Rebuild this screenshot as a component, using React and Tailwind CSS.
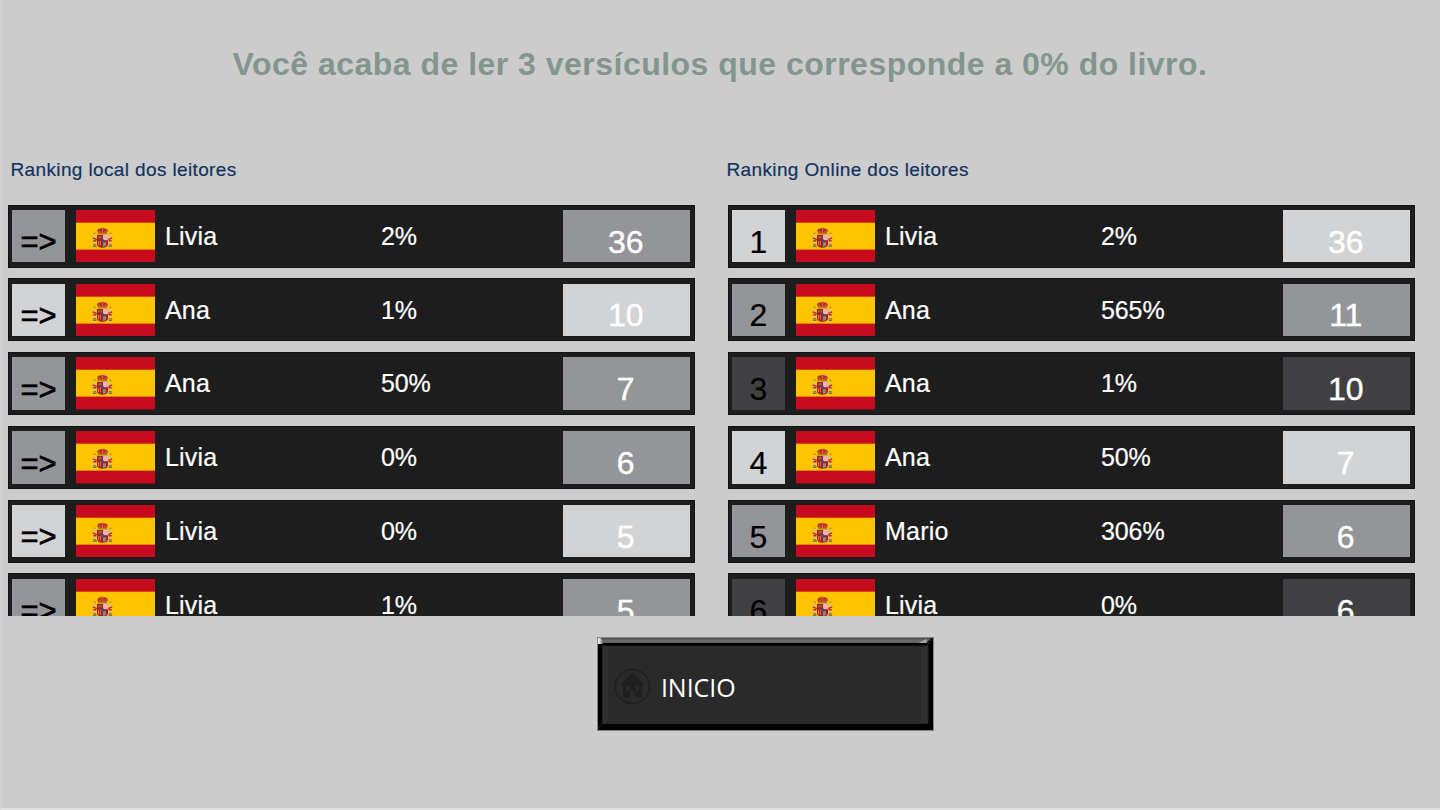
const LIGHT = 'bg-[#d1d3d4]';
const GRAY = 'bg-[#939598]';
const DARK = 'bg-[#414042]';

const localRanking = [
  { pos: '=>', name: 'Livia', percent: '2%', verses: 36, color: GRAY },
  { pos: '=>', name: 'Ana', percent: '1%', verses: 10, color: LIGHT },
  { pos: '=>', name: 'Ana', percent: '50%', verses: 7, color: GRAY },
  { pos: '=>', name: 'Livia', percent: '0%', verses: 6, color: GRAY },
  { pos: '=>', name: 'Livia', percent: '0%', verses: 5, color: LIGHT },
  { pos: '=>', name: 'Livia', percent: '1%', verses: 5, color: GRAY },
];

const onlineRanking = [
  { pos: '1', name: 'Livia', percent: '2%', verses: 36, color: LIGHT },
  { pos: '2', name: 'Ana', percent: '565%', verses: 11, color: GRAY },
  { pos: '3', name: 'Ana', percent: '1%', verses: 10, color: DARK },
  { pos: '4', name: 'Ana', percent: '50%', verses: 7, color: LIGHT },
  { pos: '5', name: 'Mario', percent: '306%', verses: 6, color: GRAY },
  { pos: '6', name: 'Livia', percent: '0%', verses: 6, color: DARK },
];

function SpainFlag() {
  return (
    <svg viewBox="0 0 79 53" preserveAspectRatio="none" className="ml-[11px] h-[52.5px] w-[79px] shrink-0">
      <rect width="79" height="53" fill="#c60b1e" />
      <rect y="12.8" width="79" height="27.2" fill="#ffc400" />
      {/* pillars */}
      <path d="M18.6 25v9M34.4 25v9" stroke="#c4c0a8" strokeWidth="1.6" />
      <path d="M17 36.5h3.6M32.6 36.5h3.6" stroke="#37608c" strokeWidth="1.4" />
      <path d="M17.2 34.8h3M32.8 34.8h3M17.6 23.5h2M33.4 23.5h2" stroke="#a8752b" strokeWidth="1.2" />
      <path d="M16.8 28.2l4 1.6M36.2 28.2l-4 1.6M17.3 31h3M32.7 31h3" stroke="#c8232c" strokeWidth="1.4" />
      {/* crown */}
      <path d="M22 23c-2-3 .5-4.5 4.5-4.8 4 .3 6.5 1.8 4.5 4.8z" fill="#c8232c" />
      <path d="M22 23.8h9M26.5 17.6v5M22.5 20.5l1.5 2M30.5 20.5l-1.5 2" stroke="#a8812b" strokeWidth="1.1" />
      {/* shield */}
      <path d="M21 25h11v9c0 2.5-2 4-5.5 4s-5.500-1.500-5.500-4z" fill="#a81c2b" />
      <path d="M27 25h5v5.5h-5z" fill="#e8b3b8" />
      <path d="M27 32.500h3v3c-.5 1-1.500 1.500-3 1.700z" fill="#87898f" />
      <path d="M22.500 31.500v4M24.300 31v5" stroke="#dfa51d" strokeWidth=".8" />
      <path d="M22 27.500h4M24 26v3" stroke="#8c6a25" strokeWidth="1.300" />
      <circle cx="26.600" cy="31" r="1.500" fill="#25578c" />
    </svg>
  );
}

function RankingRow({ row }) {
  return (
    <div className="flex h-[63px] shrink-0 items-center border border-[#111] bg-[#1d1d1d] pl-[3.5px] text-white">
      <div
        className={`flex h-[52.5px] w-[53px] shrink-0 justify-center leading-[44px] text-black ${row.color} ${
          row.pos === '=>'
            ? 'pt-[10.5px] text-[31px] [-webkit-text-stroke:0.6px_black]'
            : 'pt-[9.8px] text-[32px] [-webkit-text-stroke:0.2px_black]'
        }`}
      >
        {row.pos}
      </div>
      <SpainFlag />
      <span className="w-[226px] pl-[10px] pt-[1px] text-[25px] tracking-[0.2px] [-webkit-text-stroke:0.2px_white]">
        {row.name}
      </span>
      <span className="flex-1 pt-[1px] text-[25px] tracking-[-0.1px] [-webkit-text-stroke:0.2px_white]">
        {row.percent}
      </span>
      <div
        className={`mr-[4px] flex h-[52.5px] w-[126.5px] justify-center pt-[9.8px] pr-[1px] text-[32px] leading-[44px] [-webkit-text-stroke:0.4px_white] ${row.color}`}
      >
        {row.verses}
      </div>
    </div>
  );
}

function Ranking({ title, rows, titleClass }) {
  return (
    <section className="w-[687px]">
      <h2
        className={`h-[46px] text-[19px] leading-[22px] tracking-[0.37px] text-[#12335f] [-webkit-text-stroke:0.2px_#12335f] ${titleClass}`}
      >
        {title}
      </h2>
      <div className="flex h-[411px] flex-col gap-[10.8px] overflow-hidden">
        {rows.map((row, i) => (
          <RankingRow key={i} row={row} />
        ))}
      </div>
    </section>
  );
}

function HomeButton() {
  return (
    <button className="ml-[597px] mt-[21.5px] flex h-[94px] w-[336.5px] border border-[#858585] bg-black text-left">
      <svg viewBox="0 0 335 92" className="h-[92px] w-[335px]">
        <defs>
          <linearGradient id="topEdge" x1="0" y1="0" x2="0" y2="1">
            <stop offset="0" stopColor="#4d4d4d" />
            <stop offset=".5" stopColor="#6b6b6b" />
            <stop offset="1" stopColor="#606060" />
          </linearGradient>
          <linearGradient id="shine" x1="0" y1="0" x2="1" y2="0">
            <stop offset="0" stopColor="#fff" />
            <stop offset="1" stopColor="#777" />
          </linearGradient>
        </defs>
        <rect width="335" height="92" fill="#000" />
        <path d="M0 0h334l-5 5H5z" fill="url(#topEdge)" />
        <path d="M0 0h3l2 5-1 1H0z" fill="url(#shine)" />
        <path d="M321 5l8-4v4z" fill="#aaa" />
        <rect x="4" y="7.5" width="327" height="78.5" fill="#242424" />
        <rect x="5" y="8.5" width="325" height="77" fill="#303030" />
        <rect x="10" y="8" width="313" height="78" rx="4" fill="#2a2a2a" />
        <path d="M0 90l5-4" stroke="#292929" />
        <path d="M329 8l5-6" stroke="#383838" />
        <circle cx="34.5" cy="48.5" r="17" fill="none" stroke="#202020" strokeWidth="1.8" />
        <path
          fillRule="evenodd"
          d="M34.5 35L22 47h3v12.5h7V53h5v6.5h7V47h3zM28 48h3.5v5H28zM37.5 48H41v5h-3.5z"
          fill="#1f1f1f"
        />
        <text x="63" y="58.7" fill="#fff" fontSize="25" fontFamily="Open Sans, sans-serif">
          INICIO
        </text>
      </svg>
    </button>
  );
}

export default function App() {
  return (
    <div className="h-[810px] w-[1440px] overflow-hidden border-b-2 border-l-2 border-b-[#dfdfdf] border-l-[#d3d3d3] bg-[#cccccc] font-['Liberation_Sans',Arial,sans-serif]">
      <div className="-ml-[2px]">
        <h1 className="h-[158.5px] pt-[44px] text-center text-[32px] font-bold leading-[40px] tracking-[0.48px] text-[#83968d]">
          Você acaba de ler 3 versículos que corresponde a 0% do livro.
        </h1>
        <div className="flex gap-[33px] pl-[7.5px]">
          <Ranking title="Ranking local dos leitores" rows={localRanking} titleClass="pl-[3px]" />
          <Ranking title="Ranking Online dos leitores" rows={onlineRanking} titleClass="-ml-[1px]" />
        </div>
        <HomeButton />
      </div>
    </div>
  );
}
